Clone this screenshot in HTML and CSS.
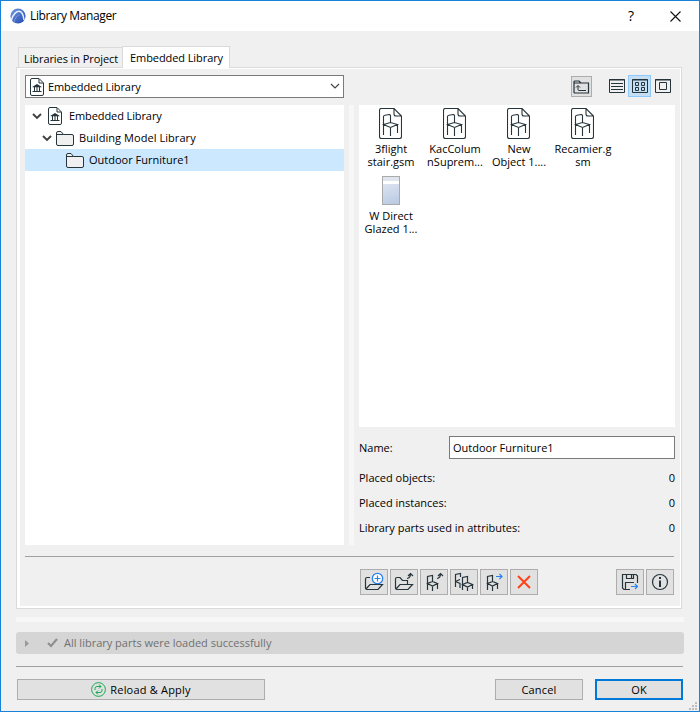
FILE: index.html
```html
<!DOCTYPE html>
<html lang="en">
<head>
<meta charset="utf-8">
<title>Library Manager</title>
<link rel="stylesheet" href="styles.css">
</head>
<body>
<svg class="defs" aria-hidden="true">
  <defs>
    <symbol id="library" viewBox="0 0 14 18"><path d="M2 .5H9L13.500 5V16Q13.500 17.500 12 17.500H2Q.5 17.500 .5 16V2Q.5 .5 2 .5Z" fill="#fff" stroke="#26343b"/><path d="M9 1V5H13" fill="none" stroke="#26343b"/><path d="M7 6L11.500 8.700V9.200H2.500V8.700ZM4 9H5V13H4ZM6.500 9H7.500V13H6.500ZM9 9H10V13H9ZM2.500 13H11.500V14H2.500Z" fill="#26343b"/></symbol>
    <symbol id="folder" viewBox="0 0 18 15"><path d="M.5 13V2Q.5 .5 2 .5H5L7.500 3.500H16Q17.500 3.500 17.500 5V13Q17.500 14.500 16 14.500H2Q.5 14.500 .5 13ZM.5 3.500H7.500" fill="#f0f0f0" stroke="#26343b"/></symbol>
    <symbol id="object" viewBox="0 0 23 31"><path d="M2.500 .5H15L22.500 8V28.500Q22.500 30.500 20.500 30.500H2.500Q.5 30.500 .5 28.500V2.500Q.5 .5 2.500 .5ZM15 .5V6Q15 8 17 8H22.500" fill="#fff" stroke="#26343b" stroke-width="1.100"/><path d="M4.500 27V8.500Q4.500 7.500 6 7.200L10.500 6.500Q11.500 6.500 11.500 7.500V14.500M4.500 16.500L11.500 14.500L18.500 16.500L11.500 19.500ZM11.500 19.500V28M18.500 16.500V25" fill="none" stroke="#26343b" stroke-width="1.100"/></symbol>
    <symbol id="expand" viewBox="0 0 10 7"><path d="M1 1L5 5L9 1" fill="none" stroke="#404040" stroke-width="1.900"/></symbol>
  </defs>
</svg>
<div class="window">
  <header class="titlebar">
    <svg class="logo" viewBox="0 0 16 16"><defs><linearGradient id="blue" x2="1" y2="1"><stop stop-color="#6e9bdf"/><stop offset="1" stop-color="#2349b0"/></linearGradient></defs><circle cx="8" cy="8" r="7.600" fill="url(#blue)"/><path d="M1.500 12C3 6 7 2.500 10 3.500C13 4.500 13.500 8 14 12" fill="none" stroke="#e6eefc" stroke-width="1.500"/><path d="M4 14.500C5 10 8 6.500 9.500 7" fill="none" stroke="#7797dc"/></svg>
    <h1>Library Manager</h1>
    <span class="help">?</span>
    <svg class="close" viewBox="0 0 11 11"><path d="M.5 .5L10.500 10.500M10.500 .5L.5 10.500" stroke="#111" stroke-width="1.100"/></svg>
  </header>
  <main>
    <nav class="tabs">
      <div class="tab"><span>Libraries in Project</span></div>
      <div class="tab active"><span>Embedded Library</span></div>
    </nav>
    <section class="panel">
      <div class="top">
        <div class="combo"><svg class="lib"><use href="#library"/></svg><span class="el">Embedded Library</span><svg class="arrow" viewBox="0 0 10 7"><path d="M1 1L5 5L9 1" fill="none" stroke="#444" stroke-width="1.200"/></svg></div>
        <div class="up"><svg width="17" height="14" viewBox="0 0 17 14"><path d="M1 12V2Q1 1 2 1H6L8 3H15.500V13H2Q1 13 1 12ZM1 3H8" fill="none" stroke="#26343b" stroke-width="1.200"/><path d="M5 6V9.500Q5 10.500 6 10.500H13M3 7.500L5 5.500L7 7.500" fill="none" stroke="#26343b"/></svg></div>
        <div class="views">
          <div class="view"><svg viewBox="0 0 16 14"><path d="M.5 .5H15.500V13.500H.5ZM0 1H16M2 4.500H14M2 7.500H14M2 10.500H14" fill="none" stroke="#26343b"/></svg></div>
          <div class="view on"><svg viewBox="0 0 16 14"><path d="M.5 .5H15.500V13.500H.5ZM0 1H16M3.500 3.500H6.500V6.500H3.500ZM9.500 3.500H12.500V6.500H9.500ZM3.500 8.500H6.500V11.500H3.500ZM9.500 8.500H12.500V11.500H9.500Z" fill="none" stroke="#26343b"/></svg></div>
          <div class="view"><svg viewBox="0 0 16 14"><path d="M.5 .5H15.500V13.500H.5ZM0 1H16M4.500 3.500H11.500V10.500H4.500Z" fill="none" stroke="#26343b"/></svg></div>
        </div>
      </div>
      <div class="content">
        <div class="tree">
          <div class="node"><svg class="exp"><use href="#expand"/></svg><svg class="lib"><use href="#library"/></svg><span class="el">Embedded Library</span></div>
          <div class="node second"><svg class="exp"><use href="#expand"/></svg><svg class="folder"><use href="#folder"/></svg><span class="bm">Building Model Library</span></div>
          <div class="node third"><svg class="folder"><use href="#folder"/></svg><span>Outdoor Furniture1</span></div>
        </div>
        <div class="splitter"></div>
        <div class="details">
          <div class="files">
            <div class="file"><svg><use href="#object"/></svg><span>3flight<br>stair.gsm</span></div>
            <div class="file"><svg><use href="#object"/></svg><span>KacColum<br>nSuprem...</span></div>
            <div class="file"><svg><use href="#object"/></svg><span>New<br>Object 1....</span></div>
            <div class="file"><svg><use href="#object"/></svg><span>Recamier.g<br>sm</span></div>
            <div class="file glazed"><div class="window-thumb"></div><span>W Direct<br>Glazed 1...</span></div>
          </div>
          <div class="name"><span>Name:</span><div class="field"><span>Outdoor Furniture1</span></div></div>
          <div class="stat"><span>Placed objects:</span><span>0</span></div>
          <div class="stat"><span>Placed instances:</span><span>0</span></div>
          <div class="stat"><span>Library parts used in attributes:</span><span>0</span></div>
        </div>
      </div>
      <div class="rule"></div>
      <div class="toolbar">
        <div class="tool"><svg viewBox="0 0 28 26"><path d="M10 8.500H7Q5.500 8.500 5.500 10V19Q5.500 20.500 7 20.500H18L22.500 15.500H10L6 20" class="ink"/><circle cx="17.500" cy="9.500" r="5.200" fill="#fff" stroke="#2c82ed" stroke-width="1.300"/><path d="M14.500 9.500H20.500M17.500 6.500V12.500" stroke="#2c82ed" stroke-width="1.200"/></svg></div>
        <div class="tool"><svg viewBox="0 0 28 26"><path d="M5.500 19V10Q5.500 8.500 7 8.500H10L12.500 11.500H17.500V15.500M6 20L10 15.500H22.500L18 20.500H7Q5.500 20.500 5.500 19M17 9.500Q20.500 9 20.500 5M18 7L20.500 4.500L23 7" class="ink"/></svg></div>
        <div class="tool"><svg viewBox="0 0 28 26"><path d="M7.500 21V7.500L12.500 6.500V12.500M7.500 14.500L12.500 12.500L17.500 14.500L12.500 17ZM12.500 17V22M17.500 14.500V20M17 9.500Q20.500 9 20.500 5M18 7L20.500 4.500L23 7" class="ink"/></svg></div>
        <div class="tool"><svg viewBox="0 0 28 26"><path d="M5.500 18V5.500L10.500 4.500V8M5.500 12.500L10 10.500M5.500 12.500L10 14.500V19M12.500 21V8.500L17.500 7.500V13.500M12.500 15.500L17.500 13.500L22.500 15.500L17.500 18ZM17.500 18V22M22.500 15.500V20" class="ink"/></svg></div>
        <div class="tool"><svg viewBox="0 0 28 26"><path d="M7.500 21V7.500L12.500 6.500V12.500M7.500 14.500L12.500 12.500L17.500 14.500L12.500 17ZM12.500 17V22M17.500 14.500V20" class="ink"/><path d="M16 7.500H22M19.500 5L22 7.500L19.500 10" fill="none" stroke="#2c82ed" stroke-width="1.200"/></svg></div>
        <div class="tool"><svg viewBox="0 0 28 26"><path d="M8 7L20 19M20 7L8 19" stroke="#ff4218" stroke-width="2"/></svg></div>
        <div class="tool save"><svg viewBox="0 0 28 26"><path d="M14 20.500H8L6.500 19V5.500H20L21.500 7V14M10.500 5.500V9.500H17.500V5.500M15.500 6V9M9.500 20V13.500H18" class="ink"/><path d="M15 17.500H21.500M19 15L21.500 17.500L19 20" fill="none" stroke="#2c82ed" stroke-width="1.200"/></svg></div>
        <div class="tool"><svg viewBox="0 0 28 26"><circle cx="14" cy="13" r="7.500" class="ink"/><path d="M13 8H15V10H13ZM13 11.500H15V18H13Z" fill="#26343b"/></svg></div>
      </div>
    </section>
    <div class="strip"></div>
    <div class="status"><svg class="play" viewBox="0 0 4 7"><path d="M0 0L4 3.500L0 7Z" fill="#999"/></svg><svg class="check" viewBox="0 0 11 10"><path d="M1 5L4 8L10 1" fill="none" stroke="#8d8d8d" stroke-width="2"/></svg><span>All library parts were loaded successfully</span></div>
    <div class="bottom-rule"></div>
    <footer>
      <div class="button reload"><svg viewBox="0 0 15 15"><circle cx="7.500" cy="7.500" r="6.900"/><path d="M4 8V6.500Q4 4.500 6 4.500H10M8 2.500L10 4.500L8 6.500M11 7V8.500Q11 10.500 9 10.500H5M7 8.500L5 10.500L7 12.500"/></svg><span>Reload &amp; Apply</span></div>
      <div class="button cancel"><span>Cancel</span></div>
      <div class="button ok"><span>OK</span></div>
    </footer>
  </main>
  <svg class="grip" viewBox="0 0 8 8"><path d="M6 0H8V2H6ZM3 3H5V5H3ZM6 3H8V5H6ZM0 6H2V8H0ZM3 6H5V8H3ZM6 6H8V8H6Z" fill="#bdbdbd"/></svg>
</div>
</body>
</html>
```
FILE: styles.css
```css
* { box-sizing: border-box; }
body { margin: 0; font: 11px/13px "Open Sans", "Noto Sans", sans-serif; letter-spacing: 0; color: #000; }
svg { display: block; flex: none; }
span { white-space: nowrap; }
.defs { position: absolute; width: 0; height: 0; }
.window { position: relative; width: 700px; height: 712px; border: 1px solid #1a82d6; background: #f0f0f0; overflow: hidden; }
.titlebar { height: 30px; display: flex; align-items: center; background: #fff; padding: 0 18px 0 9px; }
.logo { width: 16px; height: 16px; margin-right: 4px; }
h1 { font-size: 12px; line-height: 16px; font-weight: 400; letter-spacing: -.37px; margin: 0 auto 0 0; }
.help { font-size: 14px; margin-right: 36px; padding-bottom: 1px; }
.close { width: 11px; height: 11px; }
main { padding: 15px 0 0 15px; }
.tabs { display: flex; align-items: flex-end; height: 22px; padding-left: 2px; margin-bottom: -1px; position: relative; }
.tab { height: 20px; width: 104px; margin-bottom: 1px; border: 1px solid #dadada; border-width: 1px 0 0 1px; display: flex; align-items: center; padding: 2px 0 0 5px; letter-spacing: -.08px; }
.tab.active { height: 22px; width: 108px; margin-bottom: 0; background: #fff; border-width: 1px 1px 0; padding: 0 0 0 7px; }
.panel { width: 666px; height: 542px; border: 1px solid #dadada; background: linear-gradient(#f0f0f0,#f0f0f0) 3px 1px / 660px 537px no-repeat #fff; padding: 7px 0 0 8px; }
.top { height: 30px; display: flex; align-items: flex-start; }
.combo { width: 319px; height: 23px; background: #fff; border: 1px solid #7a7a7a; display: flex; align-items: center; padding: 0 3px 0 4px; }
.lib { width: 14px; height: 18px; }
.combo .lib { margin-right: 4px; }
.el { letter-spacing: -.1px; }
.bm { letter-spacing: .06px; }
.arrow { width: 10px; height: 7px; margin-left: auto; }
.up { width: 21px; height: 21px; margin: 1px 13px 0 227px; border: 1px solid #adadad; background: #e1e1e1; display: grid; place-items: center; }
.views { display: flex; }
.view { width: 23px; height: 22px; border: 1px solid transparent; display: grid; place-items: center; }
.view.on { background: #c4def3; border-color: #90c8f6; }
.view svg { width: 16px; height: 14px; }
.content { display: flex; height: 440px; }
.tree { width: 319px; background: #fff; }
.node { height: 22px; display: flex; align-items: center; padding-left: 7px; }
.node span { padding-bottom: 1px; }
.exp { width: 10px; height: 7px; margin-right: 6px; }
.node .lib { margin-right: 7px; }
.second { padding-left: 17px; }
.second .exp { margin-right: 4px; }
.third { padding-left: 41px; background: #cce8ff; }
.folder { width: 18px; height: 15px; margin-right: 5px; }
.splitter { width: 5px; margin: 0 5px; background: #f7f7f7; }
.details { width: 316px; }
.files { height: 322px; background: #fff; display: grid; grid-template-columns: repeat(4,64px); grid-template-rows: 68px 68px; padding-top: 3px; }
.file { display: flex; flex-direction: column; align-items: center; text-align: center; }
.file svg { width: 23px; height: 31px; margin-right: 1px; }
.file span { margin-top: 3px; }
.window-thumb { width: 18px; height: 29px; border: 1px solid #aaa; background: linear-gradient(#dfe5ed 0 4px,#fff 4px 7px,transparent 7px),linear-gradient(160deg,#e5ebf5,#b9c9e2); }
.glazed span { margin-top: 4px; }
.name { display: flex; height: 23px; margin: 9px 0 6px; align-items: center; justify-content: space-between; }
.field { width: 226px; height: 23px; background: #fff; border: 1px solid #7a7a7a; display: flex; align-items: center; padding-left: 3px; }
.stat { height: 25px; display: flex; align-items: center; justify-content: space-between; }
.rule { width: 649px; height: 1px; background: #a0a0a0; margin-top: 11px; }
.toolbar { display: flex; gap: 2px; margin: 12px 0 0 335px; width: 314px; }
.tool { width: 28px; height: 26px; border: 1px solid #adadad; background: #e1e1e1; }
.tool svg { width: 28px; height: 26px; margin: -1px; }
.save { margin-left: auto; }
.ink { fill: none; stroke: #26343b; stroke-width: 1.2; }
.strip { width: 668px; height: 5px; margin-top: 8px; background: #f7f7f7; }
.status { width: 668px; height: 22px; margin-top: 10px; border-radius: 3px; background: #d5d5d5; color: #707070; display: flex; align-items: center; padding-left: 9px; }
.status span { padding-bottom: 1px; }
.play { width: 4px; height: 7px; margin-right: 18px; }
.check { width: 11px; height: 10px; margin-right: 6px; }
.bottom-rule { width: 667px; height: 1px; margin-top: 12px; background: #a0a0a0; }
footer { display: flex; width: 667px; margin-top: 12px; padding-left: 1px; }
.button { width: 88px; height: 21px; border: 1px solid #adadad; background: #e1e1e1; display: flex; align-items: center; justify-content: center; letter-spacing: .2px; }
.reload { width: 248px; }
.reload svg { width: 15px; height: 15px; margin-right: 4px; fill: none; stroke: #18a957; }
.cancel { margin-left: auto; margin-right: 12px; }
.ok { border: 2px solid #0078d7; }
.grip { position: absolute; right: 2px; bottom: 1px; width: 8px; height: 8px; }
```
